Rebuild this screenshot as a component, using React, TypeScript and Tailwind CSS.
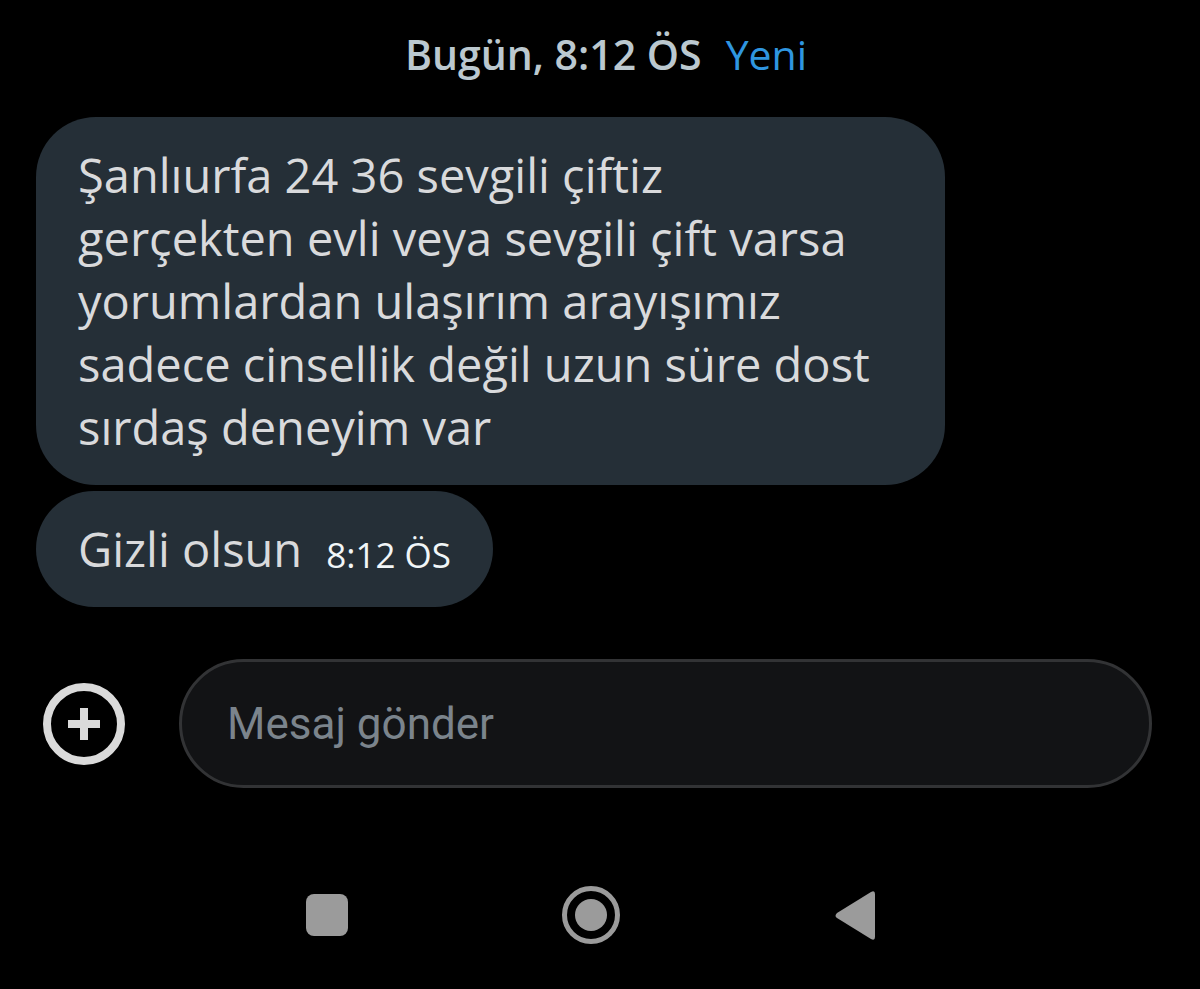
const MESSAGE_LINES = [
  'Şanlıurfa 24 36 sevgili çiftiz',
  'gerçekten evli veya sevgili çift varsa',
  'yorumlardan ulaşırım arayışımız',
  'sadece cinsellik değil uzun süre dost',
  'sırdaş deneyim var',
];

function PlusIcon() {
  return (
    <svg viewBox="0 0 82 82" className="size-[82px]" aria-hidden="true">
      <circle cx="41" cy="41" r="37" fill="none" stroke="#dadada" strokeWidth="8" />
      <path d="M41 25v32M25 41h32" stroke="#dadada" strokeWidth="8" />
    </svg>
  );
}

export default function App() {
  return (
    <div className="flex min-h-screen flex-col bg-black font-['Open_Sans',sans-serif] text-[#d9dadc]">
      <header className="flex items-center justify-center gap-6 pt-6 pl-3 text-[41px] leading-[60px]">
        <time className="font-semibold text-[#bbc8cf]">Bugün, 8:12 ÖS</time>
        <span className="text-[#2f96e0]">Yeni</span>
      </header>

      <main className="mt-[33px] flex flex-col items-start gap-[6px] px-9">
        <div className="rounded-[60px] bg-[#252f37] pt-[27px] pr-[75px] pb-[26px] pl-[42px] text-[47px] leading-[63px]">
          {MESSAGE_LINES.map((line) => (
            <p key={line}>{line}</p>
          ))}
        </div>
        <div className="flex items-end gap-6 rounded-[60px] bg-[#252f37] px-[42px] pt-[27px] pb-[26px] text-[47px] leading-[63px]">
          <p>Gizli olsun</p>
          <time className="text-[35px] leading-[52px] text-[#f1f6f8]">8:12 ÖS</time>
        </div>
      </main>

      <form className="mt-[52px] flex items-center gap-[54px] pr-12 pl-[43px]">
        <button type="button" aria-label="Ekle" className="shrink-0">
          <PlusIcon />
        </button>
        <input
          type="text"
          aria-label="Mesaj gönder"
          placeholder="Mesaj gönder"
          className="h-[129px] min-w-0 flex-1 rounded-full border-[3px] border-[#323335] bg-[#121315] px-[45px] font-['Roboto',sans-serif] text-[44px] placeholder:text-[#7b848c]"
        />
      </form>

      <nav className="mt-auto flex items-center justify-center gap-[212px] pt-16 pr-[18px] pb-11">
        <button type="button" aria-label="Son uygulamalar">
          <svg viewBox="0 0 44 60" className="h-[60px] w-[44px]" fill="#9b9b9b">
            <rect x="1" y="9" width="42" height="42" rx="8" />
          </svg>
        </button>
        <button type="button" aria-label="Ana ekran">
          <svg viewBox="0 0 60 60" className="size-[60px]">
            <circle cx="30" cy="30" r="26.5" fill="none" stroke="#9b9b9b" strokeWidth="5" />
            <circle cx="30" cy="30" r="16" fill="#9b9b9b" />
          </svg>
        </button>
        <button type="button" aria-label="Geri">
          <svg viewBox="0 0 44 60" className="h-[60px] w-[44px]" fill="#9b9b9b">
            <path d="M4 28 38 7q4-2 4 2v43q0 4-4 2L4 33q-3-2 0-5z" />
          </svg>
        </button>
      </nav>
    </div>
  );
}
